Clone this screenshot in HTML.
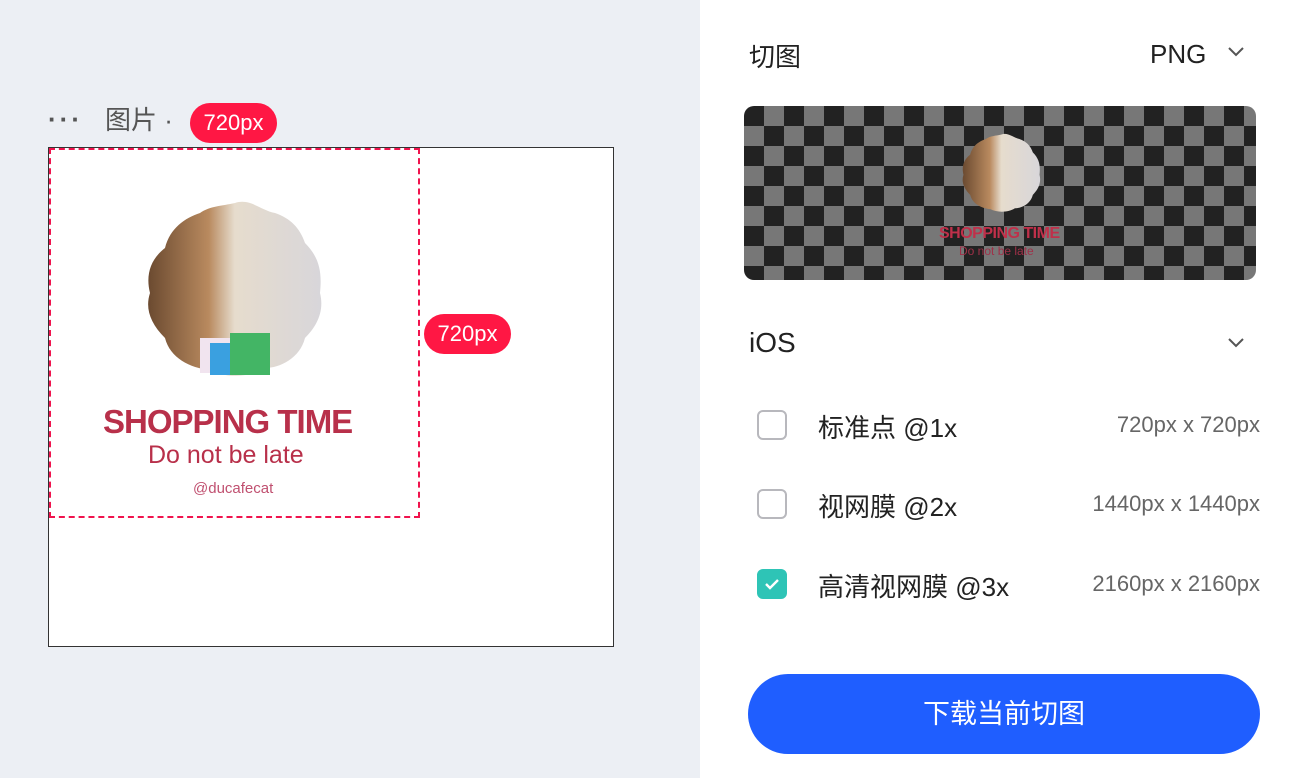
<!DOCTYPE html>
<html><head><meta charset="utf-8"><style>
*{margin:0;padding:0;box-sizing:border-box}
body{width:1300px;height:778px;position:relative;overflow:hidden;font-family:"Liberation Sans","Noto Sans CJK SC",sans-serif;background:#eceff4}
.a{position:absolute}
.badge{position:absolute;background:#ff1744;color:#fff;font-size:22px;border-radius:20px;width:87px;height:40px;line-height:40px;text-align:center}
.cb{position:absolute;left:757px;width:30px;height:30px;border:2px solid #b8b8bd;border-radius:6px;background:#fff}
.lab{position:absolute;left:818px;font-size:26px;color:#222}
.dim{position:absolute;right:40px;font-size:22px;color:#666}
</style></head><body>
<div class="a" style="left:48px;top:104px;font-size:26px;color:#555;letter-spacing:3px;font-weight:bold">···</div>
<div class="a" style="left:105px;top:100px;font-size:26px;color:#555">图片 ·</div>
<div class="a" style="left:48px;top:147px;width:566px;height:500px;background:#fff;border:1px solid #333"></div>
<div class="a" style="left:49px;top:148px;width:371px;height:370px;border:2px dashed #f0134d"></div>
<svg class="a" style="left:140px;top:198px" width="190" height="180" viewBox="0 0 190 180">
<defs><linearGradient id="g" x1="0" x2="1" y1="0" y2="0"><stop offset="0" stop-color="#6b4a30"/><stop offset="0.35" stop-color="#b98a5f"/><stop offset="0.5" stop-color="#e6dccd"/><stop offset="1" stop-color="#d8d6da"/></linearGradient>
<pattern id="ck" width="40" height="40" patternUnits="userSpaceOnUse"><rect width="40" height="40" fill="#777"/><rect width="20" height="20" fill="#222"/><rect x="20" y="20" width="20" height="20" fill="#222"/></pattern></defs>
<path d="M95 5 C110 0 120 12 135 15 C150 20 160 30 165 45 C180 60 182 75 180 95 C185 115 175 130 165 140 C160 160 140 170 125 170 C110 180 85 180 70 172 C50 170 30 160 25 140 C10 125 5 110 10 95 C5 75 12 60 25 50 C30 30 45 20 60 15 C70 8 82 8 95 5Z" fill="url(#g)"/>
<rect x="60" y="140" width="30" height="35" fill="#f1e4ef"/><rect x="70" y="145" width="20" height="32" fill="#3aa0e0"/><rect x="90" y="135" width="40" height="42" fill="#43b565"/>
</svg>
<div class="a" style="left:103px;top:403px;font-size:33px;font-weight:bold;color:#b8304a;letter-spacing:-1px">SHOPPING TIME</div>
<div class="a" style="left:148px;top:441px;font-size:25px;color:#b8304a">Do not be late</div>
<div class="a" style="left:193px;top:480px;font-size:15px;color:#c05070">@ducafecat</div>
<div class="badge" style="left:190px;top:103px">720px</div>
<div class="badge" style="left:424px;top:314px">720px</div>

<div class="a" style="left:700px;top:0;width:600px;height:778px;background:#fff"></div>
<div class="a" style="left:749px;top:37px;font-size:26px;color:#222">切图</div>
<div class="a" style="left:1150px;top:39px;font-size:26px;color:#222">PNG</div>
<svg class="a" style="left:1227px;top:46px" width="18" height="12"><path d="M2 2 L9 9 L16 2" stroke="#555" stroke-width="2" fill="none"/></svg>
<div class="a" style="left:744px;top:106px;width:512px;height:174px;border-radius:10px;overflow:hidden">
<svg class="a" style="left:0;top:0" width="512" height="174"><rect width="512" height="174" fill="url(#ck)"/></svg>
<svg class="a" style="left:215px;top:24px" width="85" height="85" viewBox="0 0 190 180"><path d="M95 5 C110 0 120 12 135 15 C150 20 160 30 165 45 C180 60 182 75 180 95 C185 115 175 130 165 140 C160 160 140 170 125 170 C110 180 85 180 70 172 C50 170 30 160 25 140 C10 125 5 110 10 95 C5 75 12 60 25 50 C30 30 45 20 60 15 C70 8 82 8 95 5Z" fill="url(#g)"/></svg>
<div class="a" style="left:195px;top:119px;font-size:16px;font-weight:bold;color:#c0304a;letter-spacing:-0.5px">SHOPPING TIME</div>
<div class="a" style="left:215px;top:138px;font-size:12px;color:#a03048">Do not be late</div>
</div>
<div class="a" style="left:749px;top:327px;font-size:28px;color:#222">iOS</div>
<svg class="a" style="left:1227px;top:337px" width="18" height="12"><path d="M2 2 L9 9 L16 2" stroke="#555" stroke-width="2" fill="none"/></svg>
<div class="cb" style="top:410px"></div><div class="lab" style="top:408px">标准点 @1x</div><div class="dim" style="top:412px">720px x 720px</div>
<div class="cb" style="top:489px"></div><div class="lab" style="top:487px">视网膜 @2x</div><div class="dim" style="top:491px">1440px x 1440px</div>
<div class="cb" style="top:569px;background:#2ec4b6;border-color:#2ec4b6"><svg width="26" height="26" style="position:absolute;left:0;top:0"><path d="M7 13 L11 17 L19 9" stroke="#fff" stroke-width="2.4" fill="none"/></svg></div><div class="lab" style="top:567px">高清视网膜 @3x</div><div class="dim" style="top:571px">2160px x 2160px</div>
<div class="a" style="left:748px;top:674px;width:512px;height:80px;border-radius:40px;background:#1f5eff;color:#fff;font-size:27px;text-align:center;line-height:80px">下载当前切图</div>
</body></html>
